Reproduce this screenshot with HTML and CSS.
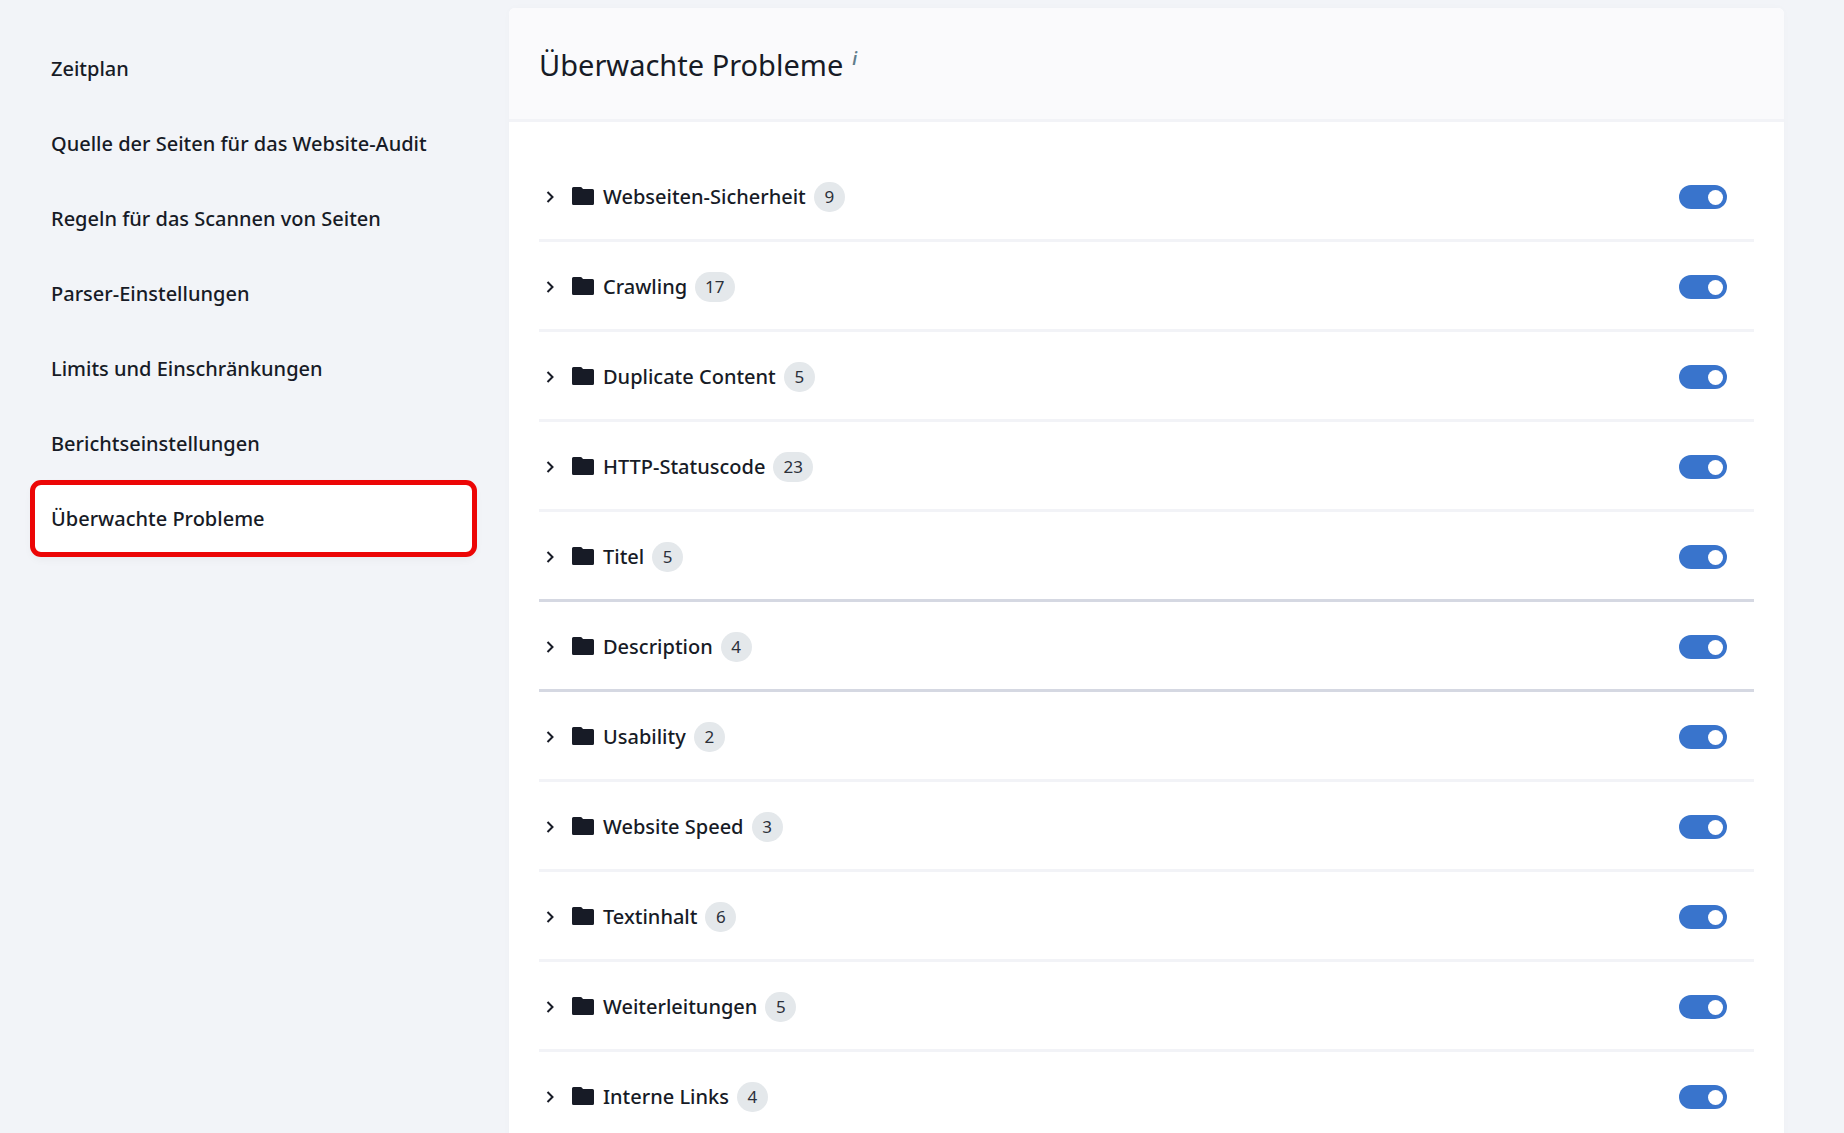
FILE: index.html
```html
<!DOCTYPE html>
<html lang="de">
<head>
    <meta charset="UTF-8">
    <meta name="viewport" content="width=device-width, initial-scale=1.0">
    <title>Überwachte Probleme</title>
    <link rel="stylesheet" href="styles.css">
</head>
<body>
    <svg class="sprite" aria-hidden="true">
        <symbol id="chevron" viewBox="0 0 9 12">
            <path d="M1.5 1 L6.5 6 L1.5 11" fill="none" stroke="currentColor" stroke-width="2"/>
        </symbol>
        <symbol id="folder" viewBox="0 0 22 20">
            <path d="M1.5 0 H8.5 Q9.3 0 9.8 .6 L11 2 H20.5 Q22 2 22 3.5 V16.5 Q22 18 20.5 18 H1.5 Q0 18 0 16.5 V1.5 Q0 0 1.5 0 Z" fill="currentColor"/>
        </symbol>
    </svg>

    <div class="page">
        <nav class="sidebar">
            <a class="sidebar-link" href="#">Zeitplan</a>
            <a class="sidebar-link" href="#">Quelle der Seiten für das Website-Audit</a>
            <a class="sidebar-link" href="#">Regeln für das Scannen von Seiten</a>
            <a class="sidebar-link" href="#">Parser-Einstellungen</a>
            <a class="sidebar-link" href="#">Limits und Einschränkungen</a>
            <a class="sidebar-link" href="#">Berichtseinstellungen</a>
            <a class="sidebar-link active" href="#" aria-current="page">Überwachte Probleme</a>
        </nav>

        <main class="card">
            <header class="card-header">
                <h1>Überwachte Probleme</h1>
                <span class="info">i</span>
            </header>

            <ul class="issue-list">
                <li class="issue">
                    <button class="expand" aria-label="Aufklappen"><svg><use href="#chevron"/></svg></button>
                    <svg class="folder"><use href="#folder"/></svg>
                    <label for="security">Webseiten-Sicherheit</label>
                    <span class="count">9</span>
                    <input class="toggle" type="checkbox" id="security" checked>
                </li>
                <li class="issue">
                    <button class="expand" aria-label="Aufklappen"><svg><use href="#chevron"/></svg></button>
                    <svg class="folder"><use href="#folder"/></svg>
                    <label for="crawling">Crawling</label>
                    <span class="count">17</span>
                    <input class="toggle" type="checkbox" id="crawling" checked>
                </li>
                <li class="issue">
                    <button class="expand" aria-label="Aufklappen"><svg><use href="#chevron"/></svg></button>
                    <svg class="folder"><use href="#folder"/></svg>
                    <label for="duplicate">Duplicate Content</label>
                    <span class="count">5</span>
                    <input class="toggle" type="checkbox" id="duplicate" checked>
                </li>
                <li class="issue">
                    <button class="expand" aria-label="Aufklappen"><svg><use href="#chevron"/></svg></button>
                    <svg class="folder"><use href="#folder"/></svg>
                    <label for="status">HTTP-Statuscode</label>
                    <span class="count">23</span>
                    <input class="toggle" type="checkbox" id="status" checked>
                </li>
                <li class="issue issue-dark">
                    <button class="expand" aria-label="Aufklappen"><svg><use href="#chevron"/></svg></button>
                    <svg class="folder"><use href="#folder"/></svg>
                    <label for="title">Titel</label>
                    <span class="count">5</span>
                    <input class="toggle" type="checkbox" id="title" checked>
                </li>
                <li class="issue issue-dark">
                    <button class="expand" aria-label="Aufklappen"><svg><use href="#chevron"/></svg></button>
                    <svg class="folder"><use href="#folder"/></svg>
                    <label for="description">Description</label>
                    <span class="count">4</span>
                    <input class="toggle" type="checkbox" id="description" checked>
                </li>
                <li class="issue">
                    <button class="expand" aria-label="Aufklappen"><svg><use href="#chevron"/></svg></button>
                    <svg class="folder"><use href="#folder"/></svg>
                    <label for="usability">Usability</label>
                    <span class="count">2</span>
                    <input class="toggle" type="checkbox" id="usability" checked>
                </li>
                <li class="issue">
                    <button class="expand" aria-label="Aufklappen"><svg><use href="#chevron"/></svg></button>
                    <svg class="folder"><use href="#folder"/></svg>
                    <label for="speed">Website Speed</label>
                    <span class="count">3</span>
                    <input class="toggle" type="checkbox" id="speed" checked>
                </li>
                <li class="issue">
                    <button class="expand" aria-label="Aufklappen"><svg><use href="#chevron"/></svg></button>
                    <svg class="folder"><use href="#folder"/></svg>
                    <label for="text">Textinhalt</label>
                    <span class="count">6</span>
                    <input class="toggle" type="checkbox" id="text" checked>
                </li>
                <li class="issue">
                    <button class="expand" aria-label="Aufklappen"><svg><use href="#chevron"/></svg></button>
                    <svg class="folder"><use href="#folder"/></svg>
                    <label for="redirects">Weiterleitungen</label>
                    <span class="count">5</span>
                    <input class="toggle" type="checkbox" id="redirects" checked>
                </li>
                <li class="issue">
                    <button class="expand" aria-label="Aufklappen"><svg><use href="#chevron"/></svg></button>
                    <svg class="folder"><use href="#folder"/></svg>
                    <label for="links">Interne Links</label>
                    <span class="count">4</span>
                    <input class="toggle" type="checkbox" id="links" checked>
                </li>
            </ul>
        </main>
    </div>
</body>
</html>
```
FILE: styles.css
```css
* {
    margin: 0;
    padding: 0;
    box-sizing: border-box;
}

body {
    font-family: "Noto Sans", "Open Sans", sans-serif;
    font-size: 20px;
    font-weight: 500;
    color: #171b26;
    background: #f2f4f8;
    height: 100vh;
    overflow: hidden;
}

.sprite {
    display: none;
}

.page {
    display: grid;
    grid-template-columns: 445px 1fr;
    gap: 33px;
    padding: 8px 60px 0 31px;
}

.sidebar {
    padding-top: 23px;
}

.sidebar-link {
    display: flex;
    align-items: center;
    height: 75px;
    padding: 0 20px;
    border-radius: 10px;
    color: inherit;
    text-decoration: none;
}

.sidebar-link.active {
    background: #fff;
    outline: 5px solid #ec0606;
    outline-offset: -4px;
    box-shadow: 0 4px 8px rgba(0, 0, 0, 0.04);
}

.card {
    background: #fff;
    border-radius: 6px;
    box-shadow: 0 0 8px rgba(0, 0, 0, 0.02);
    overflow: hidden;
}

.card-header {
    display: flex;
    gap: 9px;
    height: 114px;
    padding: 36px 30px 0;
    background: #fafafc;
    border-bottom: 3px solid #f2f3f7;
}

.card-header h1 {
    font-size: 29px;
    font-weight: 400;
    line-height: 42px;
}

.info {
    font-size: 17px;
    font-style: italic;
    font-weight: 600;
    line-height: 30px;
    color: #607d8b;
}

.issue-list {
    padding: 30px;
    list-style: none;
}

.issue {
    display: flex;
    align-items: center;
    padding: 30px 27px 27px 7px;
    border-bottom: 3px solid #f2f3f7;
}

.issue-dark {
    border-bottom-color: #d5d8e2;
}

.expand {
    display: flex;
    margin-right: 17px;
    border: none;
    background: none;
    color: inherit;
    cursor: pointer;
}

.expand svg {
    width: 9px;
    height: 12px;
}

.folder {
    width: 22px;
    height: 20px;
    margin-right: 9px;
}

.issue label {
    line-height: 30px;
}

.count {
    min-width: 31px;
    margin-left: 8px;
    padding: 0 10px;
    border-radius: 15px;
    background: #e4e8eb;
    color: #2c303a;
    font-size: 17px;
    font-weight: 400;
    line-height: 30px;
    text-align: center;
}

.toggle {
    appearance: none;
    display: flex;
    align-items: center;
    width: 48px;
    height: 24px;
    margin-left: auto;
    padding: 0 4px;
    border-radius: 12px;
    background: #b8bec9;
    cursor: pointer;
}

.toggle::before {
    content: "";
    width: 15px;
    height: 15px;
    border-radius: 50%;
    background: #fff;
}

.toggle:checked {
    justify-content: flex-end;
    background: #3974cc;
}
```
